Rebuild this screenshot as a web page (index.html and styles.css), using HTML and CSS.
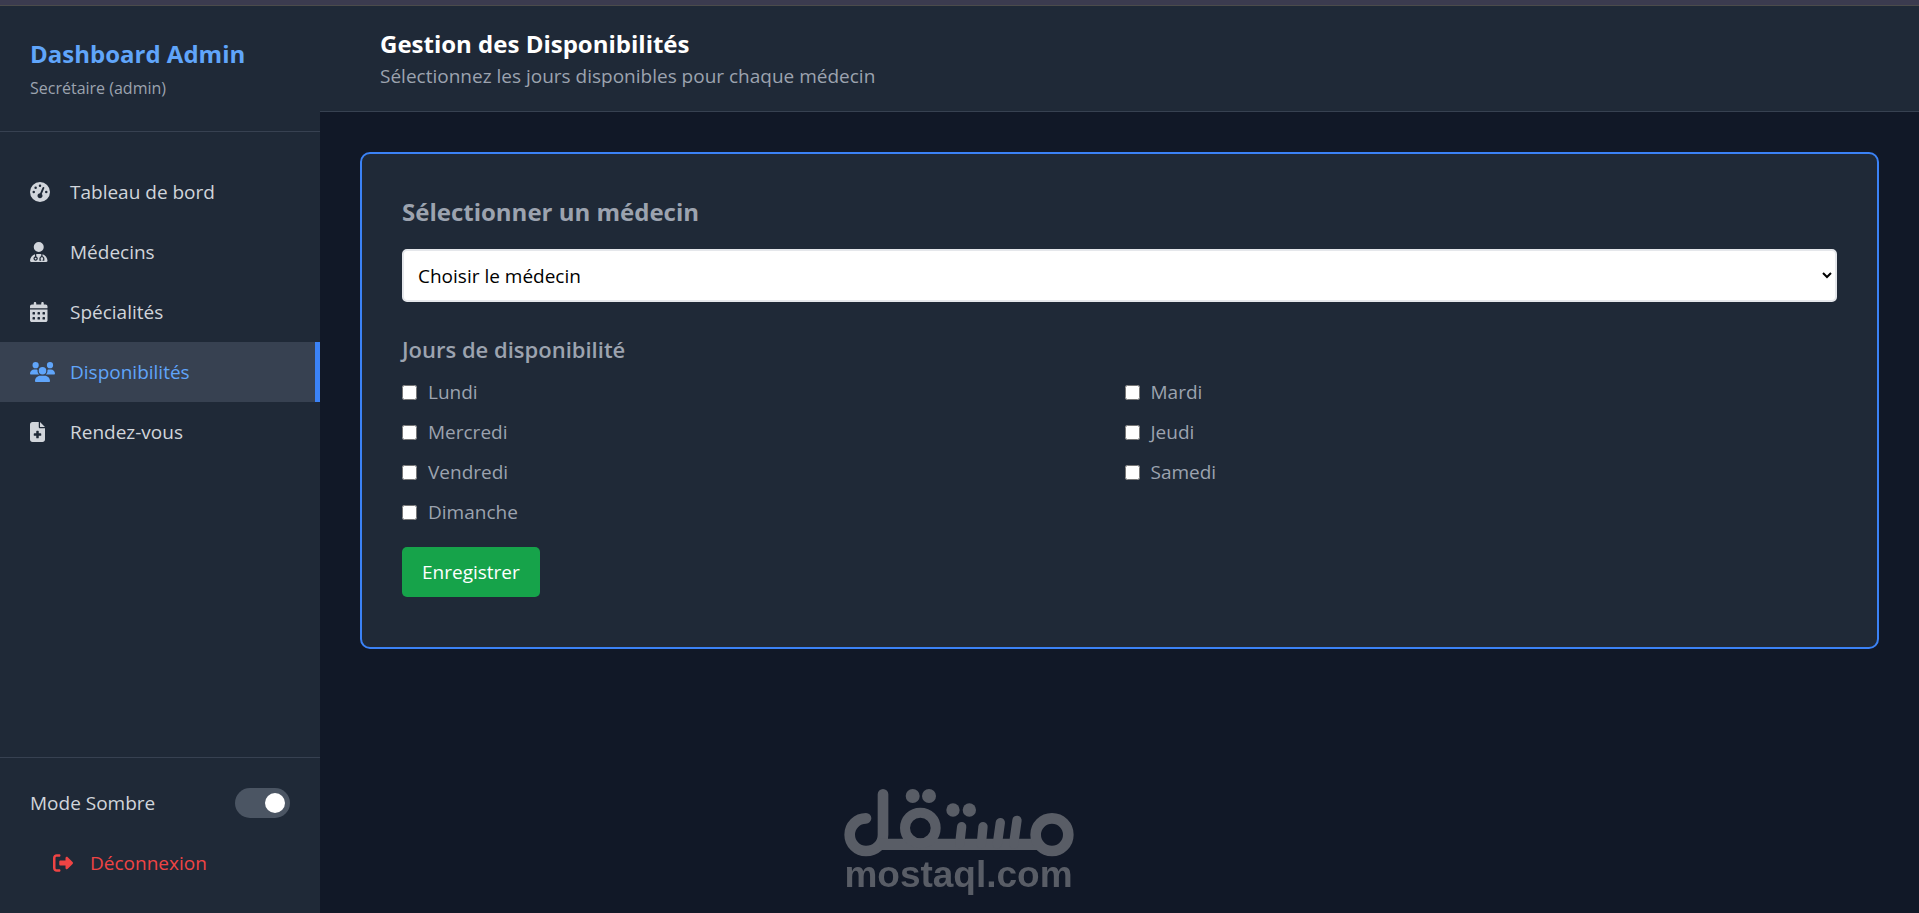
FILE: index.html
```html
<!DOCTYPE html>
<html lang="fr">
  <head>
    <meta charset="UTF-8" />
    <meta name="viewport" content="width=device-width, initial-scale=1.0" />
    <title>Gestion des Disponibilités</title>
    <link rel="stylesheet" href="styles.css">
  </head>
  <body>
    <div class="topbar"></div>
    <div class="layout">
      <aside class="sidebar">
        <div class="sidebar-header">
          <h1>Dashboard Admin</h1>
          <p>Secrétaire (admin)</p>
        </div>

        <nav class="menu">
          <a href="#" class="menu-link">
            <span class="icon">
              <svg viewBox="0 0 512 512"><path d="M0 256a256 256 0 1 1 512 0A256 256 0 1 1 0 256zM288 96a32 32 0 1 0 -64 0 32 32 0 1 0 64 0zM256 416c35.3 0 64-28.7 64-64c0-17.4-6.9-33.1-18.1-44.6L366 161.7c5.3-12.1-.2-26.3-12.3-31.6s-26.3 .2-31.6 12.3L257.9 288c-.6 0-1.3 0-1.9 0c-35.3 0-64 28.7-64 64s28.7 64 64 64zM176 144a32 32 0 1 0 -64 0 32 32 0 1 0 64 0zM96 288a32 32 0 1 0 0-64 32 32 0 1 0 0 64zm352-32a32 32 0 1 0 -64 0 32 32 0 1 0 64 0z"/></svg>
            </span>
            Tableau de bord
          </a>
          <a href="#" class="menu-link">
            <span class="icon">
              <svg viewBox="0 0 448 512"><path d="M224 256A128 128 0 1 0 224 0a128 128 0 1 0 0 256zm-96 55.2C54 332.9 0 401.3 0 482.3C0 498.7 13.3 512 29.7 512H418.3c16.4 0 29.7-13.3 29.7-29.7c0-81-54-149.4-128-171.1V362c27.6 7.1 48 32.2 48 62v40c0 8.8-7.2 16-16 16H336c-8.8 0-16-7.2-16-16s7.2-16 16-16V424c0-17.7-14.3-32-32-32s-32 14.3-32 32v24c8.8 0 16 7.2 16 16s-7.2 16-16 16H256c-8.8 0-16-7.2-16-16V424c0-29.8 20.4-54.9 48-62V304.9c-6-.6-12.1-.9-18.3-.9H178.3c-6.2 0-12.3 .3-18.3 .9v65.4c23.1 6.9 40 28.3 40 53.7c0 30.9-25.1 56-56 56s-56-25.1-56-56c0-25.4 16.9-46.8 40-53.7V311.2zM144 448a24 24 0 1 0 0-48 24 24 0 1 0 0 48z"/></svg>
            </span>
            Médecins
          </a>
          <a href="#" class="menu-link">
            <span class="icon">
              <svg viewBox="0 0 448 512"><path d="M128 0c17.7 0 32 14.3 32 32V64H288V32c0-17.7 14.3-32 32-32s32 14.3 32 32V64h48c26.5 0 48 21.5 48 48v48H0V112C0 85.5 21.5 64 48 64H96V32c0-17.7 14.3-32 32-32zM0 192H448V464c0 26.5-21.5 48-48 48H48c-26.5 0-48-21.5-48-48V192zm64 80v32c0 8.8 7.2 16 16 16h32c8.8 0 16-7.2 16-16V272c0-8.8-7.2-16-16-16H80c-8.8 0-16 7.2-16 16zm128 0v32c0 8.8 7.2 16 16 16h32c8.8 0 16-7.2 16-16V272c0-8.8-7.2-16-16-16H208c-8.8 0-16 7.2-16 16zm144-16c-8.8 0-16 7.2-16 16v32c0 8.8 7.2 16 16 16h32c8.8 0 16-7.2 16-16V272c0-8.8-7.2-16-16-16H336zM64 400v32c0 8.8 7.2 16 16 16h32c8.8 0 16-7.2 16-16V400c0-8.8-7.2-16-16-16H80c-8.8 0-16 7.2-16 16zm144-16c-8.8 0-16 7.2-16 16v32c0 8.8 7.2 16 16 16h32c8.8 0 16-7.2 16-16V400c0-8.8-7.2-16-16-16H208zm112 16v32c0 8.8 7.2 16 16 16h32c8.8 0 16-7.2 16-16V400c0-8.8-7.2-16-16-16H336c-8.8 0-16 7.2-16 16z"/></svg>
            </span>
            Spécialités
          </a>
          <a href="#" class="menu-link active">
            <span class="icon">
              <svg viewBox="0 0 640 512"><path d="M144 0a80 80 0 1 1 0 160A80 80 0 1 1 144 0zM512 0a80 80 0 1 1 0 160A80 80 0 1 1 512 0zM0 298.7C0 239.8 47.8 192 106.7 192h42.7c15.9 0 31 3.5 44.6 9.7c-1.3 7.2-1.9 14.7-1.9 22.3c0 38.2 16.8 72.5 43.3 96c-.2 0-.4 0-.7 0H21.3C9.6 320 0 310.4 0 298.7zM405.3 320c-.2 0-.4 0-.7 0c26.6-23.5 43.3-57.8 43.3-96c0-7.6-.7-15-1.9-22.3c13.6-6.3 28.7-9.7 44.6-9.7h42.7C592.2 192 640 239.8 640 298.7c0 11.8-9.6 21.3-21.3 21.3H405.3zM224 224a96 96 0 1 1 192 0 96 96 0 1 1 -192 0zM128 485.3C128 411.7 187.7 352 261.3 352H378.7C452.3 352 512 411.7 512 485.3c0 14.7-11.9 26.7-26.7 26.7H154.7c-14.7 0-26.7-11.9-26.7-26.7z"/></svg>
            </span>
            Disponibilités
          </a>
          <a href="#" class="menu-link">
            <span class="icon">
              <svg viewBox="0 0 384 512"><path d="M64 0C28.7 0 0 28.7 0 64V448c0 35.3 28.7 64 64 64H320c35.3 0 64-28.7 64-64V160H256c-17.7 0-32-14.3-32-32V0H64zM256 0V128H384L256 0zM160 240c0-8.8 7.2-16 16-16h32c8.8 0 16 7.2 16 16v48h48c8.8 0 16 7.2 16 16v32c0 8.8-7.2 16-16 16H224v48c0 8.8-7.2 16-16 16H176c-8.8 0-16-7.2-16-16V352H112c-8.8 0-16-7.2-16-16V304c0-8.8 7.2-16 16-16h48V240z"/></svg>
            </span>
            Rendez-vous
          </a>
        </nav>

        <div class="sidebar-footer">
          <div class="theme">
            <label for="dark-mode">Mode Sombre</label>
            <input type="checkbox" role="switch" id="dark-mode" class="switch" checked />
          </div>
          <a href="#" class="logout">
            <span class="icon">
              <svg viewBox="0 0 512 512"><path d="M377.9 105.9L500.7 228.7c7.2 7.2 11.3 17.1 11.3 27.3s-4.1 20.1-11.3 27.3L377.9 406.1c-6.4 6.4-15 9.9-24 9.9c-18.7 0-33.9-15.2-33.9-33.9l0-62.1-128 0c-17.7 0-32-14.3-32-32l0-64c0-17.7 14.3-32 32-32l128 0 0-62.1c0-18.7 15.2-33.9 33.9-33.9c9 0 17.6 3.6 24 9.9zM160 96L96 96c-17.7 0-32 14.3-32 32l0 256c0 17.7 14.3 32 32 32l64 0c17.7 0 32 14.3 32 32s-14.3 32-32 32l-64 0c-53 0-96-43-96-96L0 128C0 75 43 32 96 32l64 0c17.7 0 32 14.3 32 32s-14.3 32-32 32z"/></svg>
            </span>
            Déconnexion
          </a>
        </div>
      </aside>

      <div class="content">
        <header class="header">
          <h2>Gestion des Disponibilités</h2>
          <p>Sélectionnez les jours disponibles pour chaque médecin</p>
        </header>

        <main class="main">
          <form class="card">
            <label for="medecin" class="card-title">Sélectionner un médecin</label>
            <select id="medecin" name="medecin" class="select">
              <option value="">Choisir le médecin</option>
            </select>

            <h3 class="days-title">Jours de disponibilité</h3>
            <div class="days">
              <label class="day"><input type="checkbox" name="jours" value="lundi" /> Lundi</label>
              <label class="day"><input type="checkbox" name="jours" value="mardi" /> Mardi</label>
              <label class="day"><input type="checkbox" name="jours" value="mercredi" /> Mercredi</label>
              <label class="day"><input type="checkbox" name="jours" value="jeudi" /> Jeudi</label>
              <label class="day"><input type="checkbox" name="jours" value="vendredi" /> Vendredi</label>
              <label class="day"><input type="checkbox" name="jours" value="samedi" /> Samedi</label>
              <label class="day"><input type="checkbox" name="jours" value="dimanche" /> Dimanche</label>
            </div>

            <button type="submit" class="btn">Enregistrer</button>
          </form>
        </main>
      </div>
    </div>

    <div class="watermark">
      <svg viewBox="72 57 690 203" fill="none" stroke="currentColor" stroke-linecap="round">
        <path stroke-width="32" d="M138 145A49 49 0 0 0 138 243C167 243 189 222 189 194V73" />
        <line x1="178" y1="223" x2="660" y2="223" stroke-width="34" stroke-linecap="butt" />
        <circle cx="301" cy="174" r="46" stroke-width="30" />
        <circle cx="696" cy="194" r="49" stroke-width="32" />
        <g stroke-width="28">
          <line x1="425" y1="170" x2="419" y2="222" />
          <line x1="489" y1="170" x2="484" y2="222" />
          <line x1="541" y1="158" x2="532" y2="222" />
          <line x1="591" y1="151" x2="581" y2="222" />
        </g>
        <g fill="currentColor" stroke="none">
          <circle cx="278" cy="78" r="21" />
          <circle cx="327" cy="78" r="21" />
          <circle cx="399" cy="120" r="20" />
          <circle cx="448" cy="120" r="20" />
        </g>
      </svg>
      <span>mostaql.com</span>
    </div>
  </body>
</html>
```
FILE: styles.css
```css
:root {
  --bg: #111827;
  --panel: #1f2937;
  --line: #374151;
  --blue: #3b82f6;
  --blue-light: #60a5fa;
  --text: #d1d5db;
  --muted: #9ca3af;
}

* {
  margin: 0;
  padding: 0;
  box-sizing: border-box;
}

body {
  min-height: 100vh;
  display: flex;
  flex-direction: column;
  font-family: 'Segoe UI', 'Open Sans', sans-serif;
  font-size: 19px;
  line-height: 30px;
  color: var(--text);
  background-color: var(--bg);
}

a {
  color: inherit;
  text-decoration: none;
}

.topbar {
  height: 6px;
  background-color: #3b3b4f;
  border-bottom: 1px solid #4b4b4b;
}

.layout {
  flex: 1;
  display: flex;
}

/* sidebar */
.sidebar {
  width: 320px;
  flex-shrink: 0;
  display: flex;
  flex-direction: column;
  background-color: var(--panel);
}

.sidebar-header {
  padding: 30px;
  border-bottom: 1px solid var(--line);
}

.sidebar-header h1 {
  margin-bottom: 5px;
  font-size: 24px;
  line-height: 35px;
  color: var(--blue-light);
}

.sidebar-header p {
  font-size: 16px;
  line-height: 25px;
  color: var(--muted);
}

.menu {
  flex: 1;
  padding: 30px 0;
}

.menu-link {
  height: 60px;
  padding: 0 30px;
  display: flex;
  align-items: center;
  gap: 15px;
}

.menu-link.active {
  color: var(--blue-light);
  background-color: var(--line);
  border-right: 5px solid var(--blue);
}

.icon {
  width: 25px;
  display: flex;
}

.icon svg {
  height: 20px;
  fill: currentColor;
}

.sidebar-footer {
  padding: 30px 30px 20px;
  border-top: 1px solid var(--line);
}

.theme {
  display: flex;
  justify-content: space-between;
  align-items: center;
}

.switch {
  width: 55px;
  height: 30px;
  padding: 5px;
  display: flex;
  appearance: none;
  border-radius: 15px;
  background-color: #4b5563;
}

.switch::before {
  content: '';
  width: 20px;
  height: 20px;
  border-radius: 50%;
  background-color: white;
}

.switch:checked::before {
  margin-left: auto;
}

.logout {
  height: 60px;
  margin-top: 15px;
  padding: 0 20px;
  display: flex;
  align-items: center;
  gap: 15px;
  color: #ef4444;
}

.logout .icon {
  justify-content: center;
}

/* content */
.content {
  flex: 1;
}

.header {
  padding: 20px 60px;
  background-color: var(--panel);
  border-bottom: 1px solid var(--line);
}

.header h2 {
  font-size: 24px;
  line-height: 35px;
  color: white;
}

.header p {
  color: var(--muted);
}

.main {
  padding: 40px;
}

.card {
  padding: 40px 40px 50px;
  color: var(--muted);
  background-color: var(--panel);
  border: 2px solid var(--blue);
  border-radius: 10px;
}

.card-title {
  display: block;
  margin-bottom: 20px;
  font-size: 24px;
  font-weight: 700;
  line-height: 35px;
}

.select {
  width: 100%;
  height: 53px;
  margin-bottom: 30px;
  padding: 0 10px;
  font: inherit;
  color: black;
  background-color: white;
  border: 2px solid #e5e7eb;
  border-radius: 5px;
}

.days-title {
  margin-bottom: 10px;
  font-size: 22px;
  font-weight: 600;
  line-height: 35px;
}

.days {
  margin-bottom: 20px;
  display: grid;
  grid-template-columns: repeat(2, 1fr);
  gap: 10px;
}

.day {
  display: flex;
  align-items: center;
  gap: 11px;
}

.day input {
  width: 15px;
  height: 15px;
}

.btn {
  height: 50px;
  padding: 0 20px;
  font: inherit;
  color: white;
  background-color: #16a34a;
  border: none;
  border-radius: 5px;
}

.watermark {
  position: fixed;
  left: 50%;
  bottom: 20px;
  width: 230px;
  margin-left: -116px;
  color: #595d66;
  font-family: 'Liberation Sans', sans-serif;
  font-size: 37px;
  font-weight: 700;
  line-height: 36px;
  text-align: center;
}

.watermark svg {
  display: block;
  width: 100%;
}
```
